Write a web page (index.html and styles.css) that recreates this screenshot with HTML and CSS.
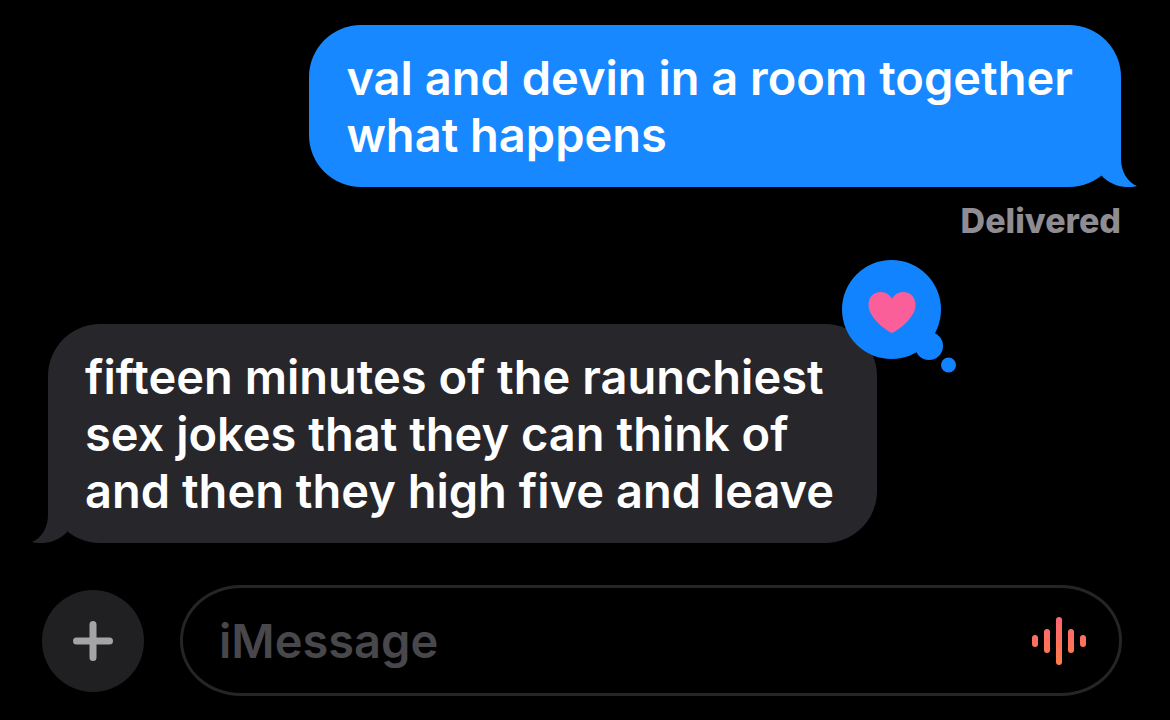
FILE: index.html
```
<!DOCTYPE html>
<html lang="en">
<head>
  <meta charset="UTF-8" />
  <meta name="viewport" content="width=device-width, initial-scale=1.0" />
  <title>Messages</title>
  <link rel="stylesheet" href="styles.css">
</head>
<body>
  <main class="chat">
    <div class="bubble sent">
      val and devin in a room together<br>what happens
      <svg class="tail" viewBox="0 0 40 60" aria-hidden="true">
        <path d="M24 0V32C24 44 30 55 40 59C28 62 14 59 4 48L0 40V0Z" />
      </svg>
    </div>
    <p class="status">Delivered</p>

    <div class="bubble received">
      fifteen minutes of the raunchiest<br>sex jokes that they can think of<br>and then they high five and leave
      <svg class="tail" viewBox="0 0 40 60" aria-hidden="true">
        <path d="M24 0V32C24 44 30 55 40 59C28 62 14 59 4 48L0 40V0Z" />
      </svg>
      <svg class="tapback" viewBox="0 0 115 113" role="img" aria-label="Loved">
        <circle cx="49.5" cy="49.5" r="49.5" />
        <circle cx="87" cy="86" r="14" />
        <circle cx="106.5" cy="105" r="7.5" />
        <path class="heart" d="M50 73C48 73 26.500 59 26.500 45C26.500 37 32 32 38.500 32C44 32 48 35 50 39C52 35 56 32 61.500 32C68 32 73.500 37 73.500 45C73.500 59 52 73 50 73Z" />
      </svg>
    </div>
  </main>

  <form class="composer">
    <button type="button" class="add" aria-label="Add attachment">
      <svg viewBox="0 0 40 40" aria-hidden="true"><path d="M20 3.500V36.500M3.500 20H36.500" /></svg>
    </button>
    <div class="field">
      <input type="text" placeholder="iMessage" aria-label="iMessage">
      <button type="button" class="voice" aria-label="Record audio">
        <svg viewBox="0 0 54 48" aria-hidden="true">
          <defs>
            <linearGradient id="wave" gradientUnits="userSpaceOnUse" x1="0" y1="0" x2="0" y2="48">
              <stop offset="0" stop-color="#ff6574" />
              <stop offset="1" stop-color="#ff7d48" />
            </linearGradient>
          </defs>
          <g fill="url(#wave)">
            <rect x="0" y="18" width="6" height="12" rx="3" />
            <rect x="12" y="12" width="6" height="24" rx="3" />
            <rect x="24" y="0" width="6" height="48" rx="3" />
            <rect x="36" y="12" width="6" height="24" rx="3" />
            <rect x="48" y="18" width="6" height="12" rx="3" />
          </g>
        </svg>
      </button>
    </div>
  </form>
</body>
</html>
```
FILE: styles.css
```
* {
  box-sizing: border-box;
}

body {
  margin: 0;
  background: #000;
  color: #fff;
  font-family: Inter, "Liberation Sans", sans-serif;
  font-size: 47px;
  font-weight: 600;
  line-height: 57px;
}

.chat {
  display: flex;
  flex-direction: column;
  padding: 25px 49px 0 48px;
}

.bubble {
  position: relative;
  padding: 24px 48px 24px 37px;
  border-radius: 52px;
  white-space: nowrap;
}

.sent {
  align-self: flex-end;
  background: #1788ff;
  fill: #1788ff;
}

.received {
  align-self: flex-start;
  padding-right: 43px;
  background: #27262b;
  fill: #27262b;
}

.tail {
  position: absolute;
  right: -16px;
  bottom: 0;
  width: 40px;
  height: 60px;
}

.received .tail {
  right: auto;
  left: -16px;
  transform: scaleX(-1);
}

.status {
  margin: 14px 0 83px;
  color: #8e8d93;
  font-size: 34px;
  font-weight: 800;
  line-height: 40px;
  text-align: right;
}

/* reaction sits over the top right corner */
.tapback {
  position: absolute;
  top: -64px;
  right: -80px;
  width: 115px;
  height: 113px;
  fill: #1283ff;
}

.heart {
  fill: #fa5f99;
}

.composer {
  display: flex;
  align-items: center;
  gap: 36px;
  padding: 42px 48px 24px 42px;
}

.composer button {
  display: flex;
  align-items: center;
  justify-content: center;
  flex: none;
  padding: 0;
  border: none;
  background: none;
  cursor: pointer;
}

.composer .add {
  width: 102px;
  height: 102px;
  border-radius: 50%;
  background: #202022;
}

.add svg {
  width: 40px;
  height: 40px;
  fill: none;
  stroke: #a4a4a6;
  stroke-width: 7;
  stroke-linecap: round;
}

.field {
  display: flex;
  flex: 1;
  align-items: center;
  height: 111px;
  padding: 0 33px 0 36px;
  border: 3px solid #252526;
  border-radius: 61px / 55px;
}

.field input {
  flex: 1;
  min-width: 0;
  padding: 0;
  border: none;
  outline: none;
  background: transparent;
  color: #fff;
  font: inherit;
}

.field input::placeholder {
  color: #48474c;
  opacity: 1;
}

.voice svg {
  width: 54px;
  height: 48px;
}
```
